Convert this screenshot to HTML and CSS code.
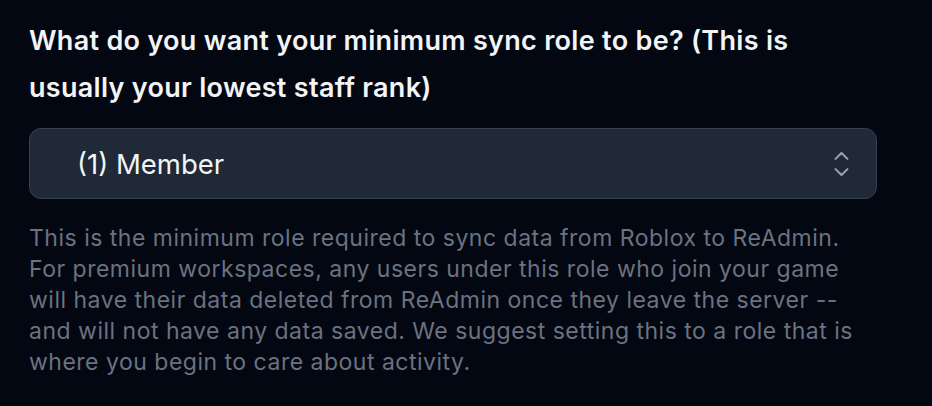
FILE: index.html
```html
<!DOCTYPE html>
<html>
<head>
  <meta charset="UTF-8">
  <title>Sync role</title>
  <link rel="stylesheet" href="styles.css">
</head>
<body>
  <div class="field">
    <label class="field-label" for="syncRole">What do you want your minimum sync role to be? (This is usually your lowest staff rank)</label>

    <div class="select-box">
      <span class="select-value" id="syncRole">(1) Member</span>
      <svg class="select-icon" width="20" height="32" viewBox="0 0 20 32" fill="none" stroke="currentColor" stroke-width="2.4" stroke-linecap="round" stroke-linejoin="round">
        <path d="M3 10 L10 3 L17 10"/>
        <path d="M3 22 L10 29 L17 22"/>
      </svg>
    </div>

    <p class="field-help">This is the minimum role required to sync data from Roblox to ReAdmin. For premium workspaces, any users under this role who join your game will have their data deleted from ReAdmin once they leave the server -- and will not have any data saved. We suggest setting this to a role that is where you begin to care about activity.</p>
  </div>
</body>
</html>
```

FILE: styles.css
```css
html, body {
  margin: 0;
  padding: 0;
  background-color: #030712;
  font-family: Inter, 'Noto Sans', sans-serif;
}

.field {
  width: 848px;
  padding: 17px 0 0 29px;
}

.field-label {
  display: block;
  color: #f3f4f6;
  font-size: 27px;
  font-weight: 600;
  letter-spacing: 0.3px;
  line-height: 47px;
}

.select-box {
  display: flex;
  justify-content: space-between;
  align-items: center;
  margin-top: 17px;
  height: 69px;
  padding: 0 26px 0 47px;
  background-color: #1f2937;
  border: 1px solid #374151;
  border-radius: 12px;
}

.select-value {
  color: #f3f4f6;
  font-size: 27.5px;
}

.select-icon {
  color: #9ca3af;
  width: 17px;
  height: 28px;
}

.field-help {
  margin: 24px 0 0 0;
  color: #6b7280;
  font-size: 23px;
  letter-spacing: 0.5px;
  line-height: 31px;
}
```
